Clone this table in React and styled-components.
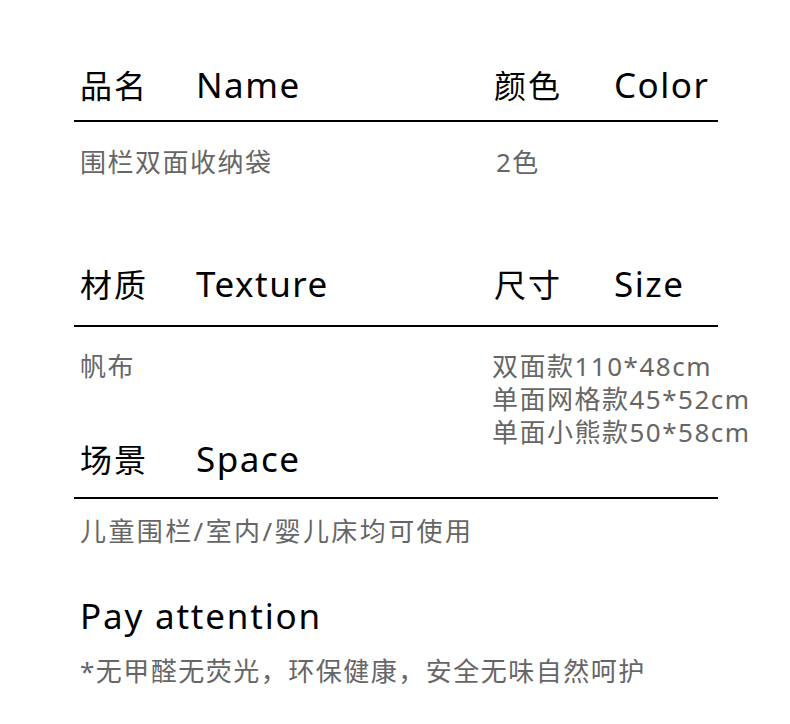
import React from "react";
import styled, { createGlobalStyle } from "styled-components";

const Global = createGlobalStyle`
  html, body { margin: 0; padding: 0; background: #fff; }
  body {
    width: 790px;
    min-height: 724px;
    font-family: "Noto Sans", "Noto Sans CJK SC", sans-serif;
    -webkit-font-smoothing: antialiased;
  }
`;

const Sheet = styled.main`
  display: grid;
  grid-template-columns: 418px 226px;
  width: 644px;
  margin: 60px 0 0 74px;
`;

const HeadCell = styled.div`
  display: flex;
  align-items: center;
  height: 48px;
  margin-top: ${(p) => p.$mt || 0}px;
  padding-left: ${(p) => (p.$right ? 2 : 6)}px;
  color: #000;
  white-space: nowrap;
`;

const CnLabel = styled.span`
  width: ${(p) => (p.$right ? 120 : 116)}px;
  font-size: 32px;
  letter-spacing: 2px;
  font-family: "Noto Sans CJK SC", sans-serif;
`;

const EnLabel = styled.span`
  font-size: 35px;
  letter-spacing: 1.5px;
`;

const Divider = styled.hr`
  grid-column: 1 / -1;
  height: 2px;
  border: 0;
  margin: ${(p) => p.$mt}px 0 0;
  background: #000;
`;

const BodyCell = styled.div`
  grid-column: ${(p) => (p.$full ? "1 / -1" : "auto")};
  margin-top: ${(p) => p.$mt || 0}px;
  padding-left: ${(p) => (p.$right ? 4 : 6)}px;
  font-size: 26px;
  line-height: ${(p) => p.$lh || 40}px;
  letter-spacing: ${(p) => p.$ls || 1.5}px;
  color: #666;
  white-space: nowrap;
`;

const SizeList = styled.ul`
  grid-row: span 2;
  align-self: start;
  list-style: none;
  margin: 23px 0 0;
  padding: 0;
  font-size: 26px;
  line-height: 33px;
  letter-spacing: 1.5px;
  color: #666;
  white-space: nowrap;
`;

const NoteTitle = styled.h2`
  grid-column: 1 / -1;
  margin: 41px 0 0;
  padding-left: 6px;
  height: 48px;
  line-height: 48px;
  font-size: 35px;
  font-weight: 400;
  letter-spacing: 1.8px;
  color: #000;
`;

const sizes = ["双面款110*48cm", "单面网格款45*52cm", "单面小熊款50*58cm"];

export default function App() {
  return (
    <>
      <Global />
      <Sheet>
        <HeadCell>
          <CnLabel>品名</CnLabel>
          <EnLabel>Name</EnLabel>
        </HeadCell>
        <HeadCell $right>
          <CnLabel $right>颜色</CnLabel>
          <EnLabel>Color</EnLabel>
        </HeadCell>
        <Divider $mt={12} />
        <BodyCell $mt={20}>围栏双面收纳袋</BodyCell>
        <BodyCell $mt={20} $right>2色</BodyCell>

        <HeadCell $mt={77}>
          <CnLabel>材质</CnLabel>
          <EnLabel>Texture</EnLabel>
        </HeadCell>
        <HeadCell $mt={77} $right>
          <CnLabel $right>尺寸</CnLabel>
          <EnLabel>Size</EnLabel>
        </HeadCell>
        <Divider $mt={18} />
        <BodyCell $mt={23} $lh={33}>帆布</BodyCell>
        <SizeList>
          {sizes.map((s) => (
            <li key={s}>{s}</li>
          ))}
        </SizeList>
        <HeadCell $mt={51}>
          <CnLabel>场景</CnLabel>
          <EnLabel>Space</EnLabel>
        </HeadCell>
        <Divider $mt={15} />
        <BodyCell $full $mt={12} $ls={2.4}>儿童围栏/室内/婴儿床均可使用</BodyCell>

        <NoteTitle>Pay attention</NoteTitle>
        <BodyCell $full $mt={11}>*无甲醛无荧光，环保健康，安全无味自然呵护</BodyCell>
      </Sheet>
    </>
  );
}
